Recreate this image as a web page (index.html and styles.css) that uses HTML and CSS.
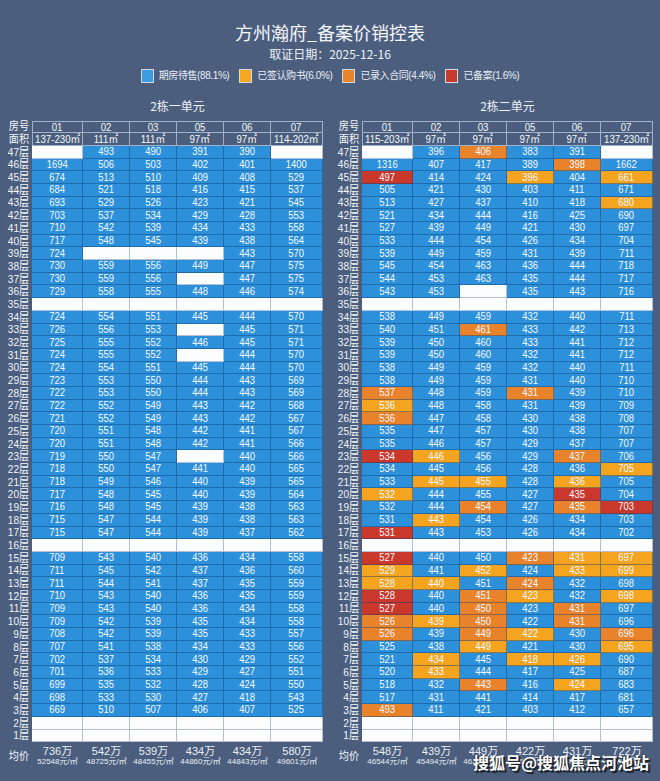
FILE: index.html
```html
<!DOCTYPE html>
<html lang="zh">
<head>
<meta charset="utf-8">
<title>方州瀚府_备案价销控表</title>
<link rel="stylesheet" href="styles.css">
</head>
<body>
<div class="page">
  <h1 class="title">方州瀚府_备案价销控表</h1>
  <div class="date">取证日期：2025-12-16</div>
  <div class="legend">
    <div class="legend-item"><span class="swatch sw-b"></span>期房待售(88.1%)</div>
    <div class="legend-item"><span class="swatch sw-y"></span>已签认购书(6.0%)</div>
    <div class="legend-item"><span class="swatch sw-o"></span>已录入合同(4.4%)</div>
    <div class="legend-item"><span class="swatch sw-r"></span>已备案(1.6%)</div>
  </div>
  <div class="units">
    <section class="unit">
      <div class="unit-title">2栋一单元</div>
      <div class="grid" id="unit1"></div>
    </section>
    <section class="unit">
      <div class="unit-title">2栋二单元</div>
      <div class="grid" id="unit2"></div>
    </section>
  </div>
</div>
<div class="watermark">搜狐号@搜狐焦点河池站</div>
<script src="script.js"></script>
</body>
</html>
```
FILE: styles.css
```css
html, body {
  margin: 0;
  padding: 0;
}
body {
  background: #4b5e7e;
  width: 660px;
  height: 781px;
  overflow: hidden;
  position: relative;
  color: #fff;
  font-family: "Noto Sans CJK SC", "Liberation Sans", sans-serif;
}
.page {
  padding-top: 21px;
}
.title {
  margin: 0;
  font-size: 18px;
  line-height: 22px;
  font-weight: normal;
  text-align: center;
  color: #f4f6fa;
}
.date {
  margin-top: 3px;
  font-size: 12px;
  line-height: 16px;
  text-align: center;
  color: #eef1f6;
}
.legend {
  margin-top: 7px;
  height: 14px;
  display: flex;
  justify-content: center;
  align-items: center;
  gap: 10px;
  font-family: "Liberation Sans", "Noto Sans CJK SC", sans-serif;
  font-size: 10px;
  letter-spacing: -0.4px;
  line-height: 14px;
  color: #e8edf4;
}
.legend-item {
  display: flex;
  align-items: center;
  gap: 5px;
}
.swatch {
  width: 11px;
  height: 12px;
  border: 1px solid #d3dbe7;
  box-sizing: content-box;
}
.sw-b { background: #3a9ae2; }
.sw-y { background: #f5a623; }
.sw-o { background: #e8842c; }
.sw-r { background: #c8392b; }

.units {
  margin-top: 15px;
  display: flex;
  gap: 7px;
}
.unit {
  width: 323px;
}
.unit-title {
  padding-left: 32px;
  text-align: center;
  font-size: 12px;
  line-height: 16px;
  color: #eef1f6;
}
.grid {
  margin-top: 6.5px;
  display: grid;
  grid-template-columns: 32px 51px 47px 47px 47px 47px 52px;
  grid-template-rows: repeat(49, 12.7px) 28px;
  font-family: "Liberation Sans", "Noto Sans CJK SC", sans-serif;
  font-size: 11px;
}
.t {
  display: block;
  white-space: nowrap;
  line-height: 11px;
  transform-origin: center center;
}
.lbl {
  display: flex;
  align-items: center;
  justify-content: flex-end;
  padding-right: 3px;
  color: #f2f5f9;
}
.lbl .t {
  transform: scaleX(0.92);
  transform-origin: right center;
}
.hc {
  display: flex;
  align-items: center;
  justify-content: center;
  border-right: 1px solid #9fb0c9;
  border-bottom: 1px solid #9fb0c9;
  box-sizing: border-box;
  color: #f4f7fb;
}
.hc .t {
  line-height: 10px;
  transform: scaleX(0.88);
}
.hc.top {
  border-top: 1px solid #9fb0c9;
}
.hc.first {
  border-left: 1px solid #9fb0c9;
}
.c {
  display: flex;
  align-items: center;
  justify-content: center;
  border-right: 1px solid rgba(18, 62, 112, 0.45);
  border-bottom: 1px solid rgba(18, 62, 112, 0.45);
  box-sizing: border-box;
  color: #f3f8ff;
}
.c .t {
  transform: scaleX(0.86);
}
.c.b { background: #2d90da; }
.c.w { background: #fcfdfe; border-color: rgba(150, 165, 190, 0.7); }
.c.y { background: #f4a41f; }
.c.o { background: #e8832b; }
.c.r { background: #c9382b; }

.avg {
  text-align: center;
  padding-top: 3px;
  color: #e9eef5;
  white-space: nowrap;
}
.avg .p {
  display: block;
  font-size: 11px;
  line-height: 12px;
}
.avg .u {
  display: block;
  font-size: 8px;
  line-height: 10px;
}
.watermark {
  position: absolute;
  left: 473px;
  top: 753px;
  font-family: "Noto Sans CJK SC", sans-serif;
  font-size: 16px;
  line-height: 18px;
  font-weight: bold;
  color: #ffffff;
  white-space: nowrap;
  text-shadow: 1px 1px 0 #1e2430, 2px 2px 1px rgba(0, 0, 0, 0.7), -1px 0 0 rgba(0,0,0,0.4);
}
```
FILE: script.js
```js
(function () {
  var unit1 = {
    head: ["01", "02", "03", "05", "06", "07"],
    area: ["137-230㎡", "111㎡", "111㎡", "97㎡", "97㎡", "114-202㎡"],
    rows: [
      "47:,493,490,391,390,",
      "46:1694,506,503,402,401,1400",
      "45:674,513,510,409,408,529",
      "44:684,521,518,416,415,537",
      "43:693,529,526,423,421,545",
      "42:703,537,534,429,428,553",
      "41:710,542,539,434,433,558",
      "40:717,548,545,439,438,564",
      "39:724,,,,443,570",
      "38:730,559,556,449,447,575",
      "37:730,559,556,,447,575",
      "36:729,558,555,448,446,574",
      "35:,,,,,",
      "34:724,554,551,445,444,570",
      "33:726,556,553,,445,571",
      "32:725,555,552,446,445,571",
      "31:724,555,552,,444,570",
      "30:724,554,551,445,444,570",
      "29:723,553,550,444,443,569",
      "28:722,553,550,444,443,569",
      "27:722,552,549,443,442,568",
      "26:721,552,549,443,442,567",
      "25:720,551,548,442,441,567",
      "24:720,551,548,442,441,566",
      "23:719,550,547,,440,566",
      "22:718,550,547,441,440,565",
      "21:718,549,546,440,439,565",
      "20:717,548,545,440,439,564",
      "19:716,548,545,439,438,563",
      "18:715,547,544,439,438,563",
      "17:715,547,544,439,437,562",
      "16:,,,,,",
      "15:709,543,540,436,434,558",
      "14:711,545,542,437,436,560",
      "13:711,544,541,437,435,559",
      "12:710,543,540,436,435,559",
      "11:709,543,540,436,434,558",
      "10:709,542,539,435,434,558",
      "9:708,542,539,435,433,557",
      "8:707,541,538,434,433,556",
      "7:702,537,534,430,429,552",
      "6:701,536,533,429,427,551",
      "5:699,535,532,428,424,550",
      "4:698,533,530,427,418,543",
      "3:669,510,507,406,407,525",
      "2:,,,,,",
      "1:,,,,,"
    ],
    avg: [["736万", "52548元/㎡"], ["542万", "48725元/㎡"], ["539万", "48455元/㎡"],
          ["434万", "44860元/㎡"], ["434万", "44843元/㎡"], ["580万", "49601元/㎡"]]
  };
  var unit2 = {
    head: ["01", "02", "03", "05", "06", "07"],
    area: ["115-203㎡", "97㎡", "97㎡", "97㎡", "97㎡", "137-230㎡"],
    rows: [
      "47:,396,406o,383,391,",
      "46:1316,407,417,389,398o,1662",
      "45:497r,414,424,396y,404,661y",
      "44:505,421,430,403,411,671",
      "43:513,427,437,410,418,680y",
      "42:521,434,444,416,425,690",
      "41:527,439,449,421,430,697",
      "40:533,444,454,426,434,704",
      "39:539,449,459,431,439,711",
      "38:545,454,463,436,444,718",
      "37:544,453,463,435,444,717",
      "36:543,453,,435,443,716",
      "35:,,,,,",
      "34:538,449,459,432,440,711",
      "33:540,451,461o,433,442,713",
      "32:539,450,460,433,441,712",
      "31:539,450,460,432,441,712",
      "30:538,449,459,432,440,711",
      "29:538,449,459,431,440,710",
      "28:537o,448,459,431o,439,710",
      "27:536y,448,458,431,439,709",
      "26:536o,447,458,430,438,708",
      "25:535,447,457,430,438,707",
      "24:535,446,457,429,437,707",
      "23:534r,446y,456,429,437o,706",
      "22:534,445,456,428,436,705y",
      "21:533,445y,455y,428,436y,705",
      "20:532y,444,455,427,435r,704",
      "19:532,444,454o,427,435o,703r",
      "18:531,443y,454,426,434,703",
      "17:531r,443,453,426,434,702",
      "16:,,,,,",
      "15:527r,440,450,423o,431y,697y",
      "14:529y,441,452y,424,433y,699y",
      "13:528y,440y,451,424o,432,698",
      "12:528r,440,451o,423y,432,698y",
      "11:527r,440,450o,423,431o,697",
      "10:526o,439y,450o,422,431o,696",
      "9:526o,439,449o,422y,430,696o",
      "8:525,438,449y,421,430,695y",
      "7:521,434y,445,418y,426y,690",
      "6:520,433y,444,417,425,687",
      "5:518,432,443o,416,424y,683",
      "4:517,431,441,414,417,681",
      "3:493o,411,421,403,412,657",
      "2:,,,,,",
      "1:,,,,,"
    ],
    avg: [["548万", "46544元/㎡"], ["439万", "45494元/㎡"], ["449万", "46290元/㎡"],
          ["422万", "43516元/㎡"], ["431万", "44436元/㎡"], ["722万", "52705元/㎡"]]
  };

  function build(el, u) {
    function add(cls, txt) {
      var d = document.createElement("div");
      d.className = cls;
      if (txt) {
        var s = document.createElement("span");
        s.className = "t";
        s.textContent = txt;
        d.appendChild(s);
      }
      el.appendChild(d);
      return d;
    }
    add("lbl", "房号");
    u.head.forEach(function (h, i) { add("hc top" + (i === 0 ? " first" : ""), h); });
    add("lbl", "面积");
    u.area.forEach(function (a, i) { add("hc" + (i === 0 ? " first" : ""), a); });
    u.rows.forEach(function (r) {
      var parts = r.split(":");
      add("lbl", parts[0] + "层");
      parts[1].split(",").forEach(function (v) {
        if (!v) { add("c w", ""); return; }
        var m = v.match(/^(\d+)([yor]?)$/);
        add("c " + (m[2] || "b"), m[1]);
      });
    });
    add("lbl", "均价");
    u.avg.forEach(function (a) {
      var d = add("avg", "");
      var p = document.createElement("span");
      p.className = "p";
      p.textContent = a[0];
      var s = document.createElement("span");
      s.className = "u";
      s.textContent = a[1];
      d.appendChild(p);
      d.appendChild(s);
    });
  }

  build(document.getElementById("unit1"), unit1);
  build(document.getElementById("unit2"), unit2);
})();
```
